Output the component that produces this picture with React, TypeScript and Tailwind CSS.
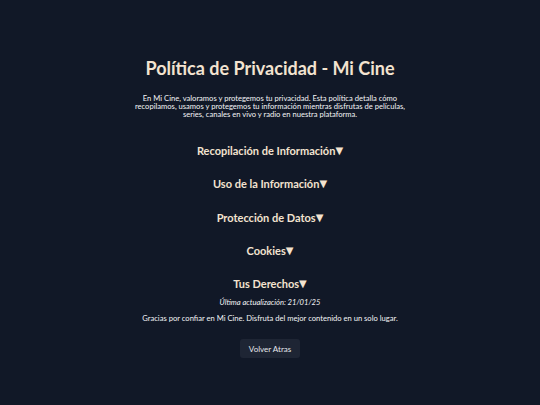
import { useState } from "react";

const sections = [
  {
    title: "Recopilación de Información",
    body: "Recopilamos datos como tu nombre, correo electrónico y preferencias de contenido.",
  },
  {
    title: "Uso de la Información",
    body: "Usamos tu información para personalizar tu experiencia y mejorar nuestros servicios.",
  },
  {
    title: "Protección de Datos",
    body: "Aplicamos medidas de seguridad para proteger tu información personal.",
  },
  {
    title: "Cookies",
    body: "Utilizamos cookies para recordar tus preferencias y analizar el uso de la plataforma.",
  },
  {
    title: "Tus Derechos",
    body: "Puedes acceder, corregir o eliminar tus datos en cualquier momento.",
  },
];

export default function App() {
  const [open, setOpen] = useState<number | null>(null);

  return (
    <div
      className="min-h-[405px] bg-[#111827] text-white flex flex-col items-center pt-[57px] pb-10"
      style={{ fontFamily: "'Lato', 'Noto Sans', sans-serif" }}
    >
      <h1 className="text-[18px] leading-[22px] font-bold text-[#f3e3d0]">
        Política de Privacidad - Mi Cine
      </h1>
      <p className="mt-[15px] w-[276px] text-center text-[7.6px] leading-[8px] text-gray-100">
        En Mi Cine, valoramos y protegemos tu privacidad. Esta política detalla cómo
        recopilamos, usamos y protegemos tu información mientras disfrutas de películas,
        series, canales en vivo y radio en nuestra plataforma.
      </p>

      <div className="mt-[26px] flex flex-col items-center gap-[19.3px]">
        {sections.map((s, i) => (
          <div key={s.title} className="flex flex-col items-center">
            <button
              onClick={() => setOpen(open === i ? null : i)}
              className="text-[11px] leading-[14px] font-bold text-[#f3e3d0] flex items-center"
            >
              {s.title}
              <span
                className="text-[10px] leading-[14px]"
                style={{ fontFamily: "'DejaVu Sans', sans-serif" }}
              >
                ▼
              </span>
            </button>
            {open === i && (
              <p className="mt-1 w-[260px] text-center text-[7.4px] text-gray-200">{s.body}</p>
            )}
          </div>
        ))}
      </div>

      <p className="mt-[6px] text-[7.6px] leading-[10px] italic text-gray-100">
        Última actualización: 21/01/25
      </p>
      <p className="mt-[6px] text-[7.6px] leading-[10px] text-gray-100">
        Gracias por confiar en Mi Cine. Disfruta del mejor contenido en un solo lugar.
      </p>

      <button className="mt-[16px] h-[19px] px-[9px] rounded-[3px] bg-[#1e2534] text-[8px] text-gray-200">
        Volver Atras
      </button>
    </div>
  );
}
